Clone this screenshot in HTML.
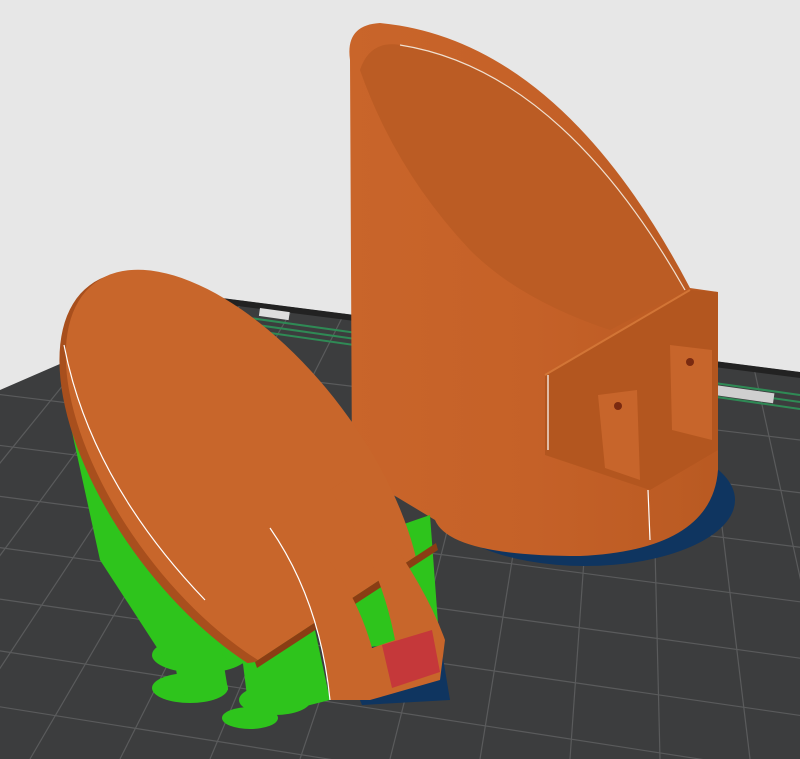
<!DOCTYPE html>
<html><head><meta charset="utf-8"><style>
html,body{margin:0;padding:0;background:#e7e7e7;overflow:hidden;width:800px;height:759px}
svg{display:block}
</style></head><body>
<svg width="800" height="759" viewBox="0 0 800 759" xmlns="http://www.w3.org/2000/svg">
<defs>
<clipPath id="bed"><path d="M0,390 L214,297 L800,372 L800,759 L0,759 Z"/></clipPath>
<clipPath id="ov"><path d="M0,0 L800,0 L800,520 L436,543 L255,662 L0,700 Z"/></clipPath>
<linearGradient id="cyl" x1="0" x2="1" y1="0" y2="0">
<stop offset="0" stop-color="#c9652a"/><stop offset="0.5" stop-color="#c56128"/><stop offset="1" stop-color="#b95a22"/></linearGradient>
</defs>
<rect width="800" height="759" fill="#e7e7e7"/>
<g clip-path="url(#bed)">
<rect width="800" height="759" fill="#3c3d3e"/>
<g stroke="#5a5b5c" stroke-width="1.2">
<line x1="-200" y1="420" x2="900" y2="560"/><line x1="-200" y1="470" x2="900" y2="615"/>
<line x1="-200" y1="520" x2="900" y2="672"/><line x1="-200" y1="570" x2="900" y2="730"/>
<line x1="-200" y1="620" x2="900" y2="790"/><line x1="-200" y1="675" x2="900" y2="850"/>
<line x1="-200" y1="730" x2="900" y2="910"/><line x1="-200" y1="370" x2="900" y2="505"/>
<line x1="-200" y1="785" x2="900" y2="970"/><line x1="-200" y1="320" x2="900" y2="452"/>
<line x1="250" y1="290" x2="-60" y2="759"/><line x1="300" y1="296" x2="30" y2="759"/>
<line x1="350" y1="302" x2="120" y2="759"/><line x1="400" y1="308" x2="210" y2="759"/>
<line x1="450" y1="314" x2="300" y2="759"/><line x1="500" y1="320" x2="390" y2="759"/>
<line x1="550" y1="326" x2="480" y2="759"/><line x1="600" y1="332" x2="570" y2="759"/>
<line x1="650" y1="338" x2="660" y2="759"/><line x1="700" y1="344" x2="750" y2="759"/>
<line x1="750" y1="350" x2="840" y2="759"/><line x1="800" y1="356" x2="930" y2="759"/>
<line x1="200" y1="284" x2="-150" y2="759"/><line x1="150" y1="278" x2="-240" y2="759"/>
</g>
<path d="M214,297 L800,372 L800,378 L214,303 Z" fill="#222"/>
<g stroke="#2f8a55" stroke-width="2"><line x1="250" y1="318" x2="800" y2="395"/><line x1="250" y1="324" x2="800" y2="402"/><line x1="250" y1="330" x2="800" y2="409"/></g>
<rect x="260" y="308" width="30" height="8" fill="#ddd" transform="rotate(8 260 308)"/>
<rect x="715" y="385" width="60" height="10" fill="#cfcfcf" transform="rotate(8 715 385)"/>
</g>
<ellipse cx="585" cy="500" rx="150" ry="66" fill="#0f3560"/>
<path d="M350,60 Q345,25 380,23 Q560,40 690,288 L718,292 L718,470 Q712,550 580,556 Q450,556 435,520 L352,470 Z" fill="url(#cyl)"/>
<path d="M360,70 Q370,40 400,45 Q560,70 685,290 L610,330 Q520,300 470,250 Q395,170 360,70 Z" fill="#bb5c24"/>
<path d="M545,375 L690,290 L718,292 L718,450 L650,490 L545,455 Z" fill="#b3561f"/>
<path d="M545,375 L690,290" stroke="#d27536" stroke-width="2"/>
<path d="M598,395 L637,390 L640,480 L605,468 Z" fill="#c7652b"/>
<path d="M670,345 L712,350 L712,440 L672,430 Z" fill="#c7652b"/>
<circle cx="618" cy="406" r="4" fill="#7a2a10"/><circle cx="690" cy="362" r="4" fill="#7a2a10"/>
<path d="M548,375 L548,450 M648,490 L650,540" stroke="#fff" stroke-width="1.2" fill="none"/>
<path d="M400,45 Q560,70 685,290" stroke="#f0e0d0" stroke-width="1.2" fill="none"/>
<g fill="#2ec41c">
<ellipse cx="200" cy="655" rx="48" ry="18"/><ellipse cx="190" cy="688" rx="38" ry="15"/>
<ellipse cx="275" cy="700" rx="36" ry="15"/><ellipse cx="250" cy="718" rx="28" ry="11"/>
<ellipse cx="250" cy="652" rx="28" ry="12"/>
<path d="M65,400 L110,390 L190,600 L215,655 L165,660 L100,560 Z"/>
<path d="M150,500 L200,520 L228,690 L180,695 Z"/>
<path d="M230,560 L300,560 L330,700 L250,720 Z"/>
<path d="M300,560 L430,515 L440,650 L340,700 Z"/>
</g>
<g clip-path="url(#ov)">
<ellipse cx="240" cy="485" rx="250" ry="125" transform="rotate(53 240 485)" fill="#a84f1d"/>
<ellipse cx="244" cy="481" rx="248" ry="122" transform="rotate(53 244 481)" fill="#c8662b"/>
</g>
<path d="M255,662 L436,543 L438,550 L257,668 Z" fill="#8a3d14"/>
<path d="M64,345 Q90,480 205,600" stroke="#fff" stroke-width="1.2" fill="none"/>
<path d="M340,650 L440,640 L450,700 L362,705 Z" fill="#0f3560"/>
<path d="M270,528 Q320,600 330,700 L370,700 L440,680 L445,640 Q420,570 345,480 L330,490 Q380,560 395,640 L372,648 Q350,570 290,520 Z" fill="#c8662b"/>
<path d="M382,645 L432,630 L440,672 L392,688 Z" fill="#c5383a"/>
<path d="M270,528 Q320,600 330,700" stroke="#fff" stroke-width="1.2" fill="none"/>
</svg>
</body></html>
